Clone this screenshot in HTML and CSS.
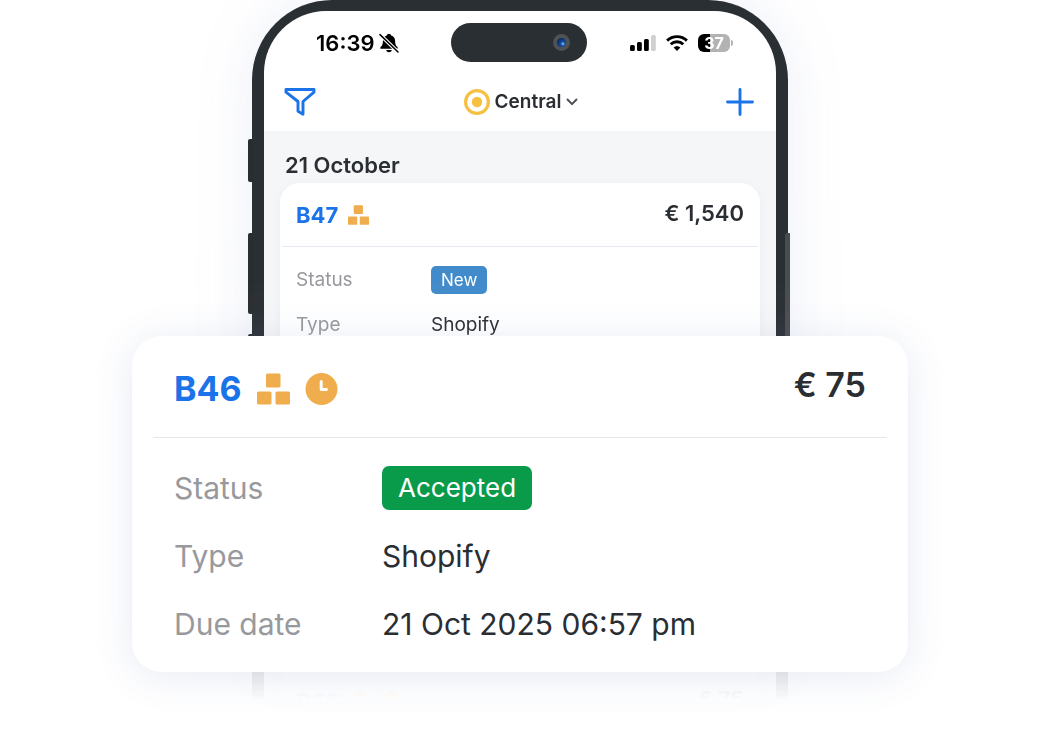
FILE: index.html
```html
<!DOCTYPE html>
<html lang="en">
<head>
  <meta charset="UTF-8" />
  <meta name="viewport" content="width=device-width, initial-scale=1.0"/>
  <title>Orders</title>
  <link rel="stylesheet" href="styles.css">
</head>
<body>
  <!-- Shared icons -->
  <svg class="sprite" aria-hidden="true">
    <symbol id="boxes" viewBox="0 0 33 31">
      <rect x="9" y="0" width="14.5" height="14" rx="1.5" />
      <rect x="0" y="18" width="14.5" height="13" rx="1.5" />
      <rect x="18.5" y="18" width="14.5" height="13" rx="1.5" />
    </symbol>
    <symbol id="clock" viewBox="0 0 32 32">
      <path fill-rule="evenodd" d="M16 0a16 16 0 1 1 0 32a16 16 0 0 1 0-32zM15.700 7a1.500 1.500 0 0 0-1.500 1.500v8c0 .8.600 1.400 1.400 1.400h5.400a1.400 1.400 0 0 0 0-2.800h-3.800v-6.600a1.500 1.500 0 0 0-1.500-1.500z" />
    </symbol>
  </svg>

  <main class="stage">
    <div class="phone">
      <div class="device">
        <span class="side-btn action"></span>
        <span class="side-btn volume-up"></span>
        <span class="side-btn volume-down"></span>
        <span class="side-btn power"></span>

        <div class="screen">
          <div class="status-bar">
            <div class="status-left">
              <span>16:39</span>
              <svg class="bell" viewBox="0 0 20 20" aria-hidden="true">
                <path d="M10 .8c1.100 0 1.900.7 2.200 1.700c2.500.8 3.900 2.700 3.900 5.400c0 3.500.9 4.800 2.500 6.200v1.600H1.400v-1.600c1.600-1.400 2.500-2.700 2.500-6.200c0-2.700 1.400-4.600 3.900-5.400C8.100 1.500 8.900.8 10 .8zM7.200 17.100h5.600c-.3 1.400-1.400 2.200-2.800 2.200s-2.500-.8-2.800-2.200z" />
                <path d="M1 1.600l18 17.400" stroke="#fff" stroke-width="3.600" />
                <path d="M1 1.600l18 17.400" stroke="#000" stroke-width="1.500" stroke-linecap="round" />
              </svg>
            </div>
            <div class="island"><span class="camera"></span></div>
            <div class="status-right">
              <svg width="26" height="16" viewBox="0 0 26 16" aria-hidden="true">
                <rect x="0" y="10" width="4.800" height="6" rx="1.500" />
                <rect x="7" y="7" width="4.800" height="9" rx="1.500" />
                <rect x="14" y="4" width="4.800" height="12" rx="1.500" />
                <rect x="21" y="0" width="4.800" height="16" rx="1.500" fill="#d0d0d1" />
              </svg>
              <svg width="22" height="16" viewBox="0 0 22 16" aria-hidden="true">
                <g fill="none" stroke="#000" stroke-width="2.900">
                  <path d="M1.100 5.600a14.200 14.200 0 0 1 19.800 0" />
                  <path d="M4.700 9.300a9.200 9.200 0 0 1 12.600 0" />
                </g>
                <path d="M11 16l-3.400-3.500a5 5 0 0 1 6.800 0z" />
              </svg>
              <div class="battery"><span>37</span></div>
            </div>
          </div>

          <header class="nav">
            <button type="button" class="icon-btn" aria-label="Filter">
              <svg width="32" height="28" viewBox="0 0 32 28" fill="none" stroke="#1a73e8" stroke-width="2.900" stroke-linejoin="round">
                <path d="M2 1.500h28v2.700L19 13.500v12.700l-5-2.900v-9.800L2 4.200z" />
              </svg>
            </button>
            <button type="button" class="location">
              <svg width="26" height="26" viewBox="0 0 26 26" aria-hidden="true">
                <circle cx="13" cy="13" r="11.400" fill="none" stroke="#f6c041" stroke-width="3.200" />
                <circle cx="13" cy="13" r="5.200" fill="#f6c041" />
              </svg>
              Central
              <svg width="12" height="8" viewBox="0 0 12 8" fill="none" stroke="#4a4f55" stroke-width="1.900" stroke-linecap="round" stroke-linejoin="round" aria-hidden="true">
                <path d="M1.500 1.500L6 6.200l4.500-4.700" />
              </svg>
            </button>
            <button type="button" class="icon-btn" aria-label="Add order">
              <svg width="28" height="28" viewBox="0 0 28 28" stroke="#1a73e8" stroke-width="2.900" stroke-linecap="round">
                <path d="M14 1.500v25M1.500 14h25" />
              </svg>
            </button>
          </header>

          <div class="list">
            <h2 class="date">21 October</h2>

            <article class="card">
              <div class="card-head">
                <div class="card-title">
                  <a href="#b47">B47</a>
                  <svg class="boxes"><use href="#boxes" /></svg>
                </div>
                <strong>€ 1,540</strong>
              </div>
              <dl class="rows">
                <div class="row">
                  <dt>Status</dt>
                  <dd><span class="badge new">New</span></dd>
                </div>
                <div class="row">
                  <dt>Type</dt>
                  <dd>Shopify</dd>
                </div>
              </dl>
            </article>

            <article class="card">
              <div class="card-head">
                <div class="card-title">
                  <a href="#b46">B46</a>
                  <svg class="boxes"><use href="#boxes" /></svg>
                  <svg class="clock"><use href="#clock" /></svg>
                </div>
                <strong>€ 75</strong>
              </div>
            </article>
          </div>
        </div>
      </div>
    </div>

    <!-- Enlarged order -->
    <article class="card featured" id="b46">
      <div class="card-head">
        <div class="card-title">
          <a href="#b46">B46</a>
          <svg class="boxes"><use href="#boxes" /></svg>
          <svg class="clock"><use href="#clock" /></svg>
        </div>
        <strong>€ 75</strong>
      </div>
      <dl class="rows">
        <div class="row">
          <dt>Status</dt>
          <dd><span class="badge accepted">Accepted</span></dd>
        </div>
        <div class="row">
          <dt>Type</dt>
          <dd>Shopify</dd>
        </div>
        <div class="row">
          <dt>Due date</dt>
          <dd>21 Oct 2025 06:57 pm</dd>
        </div>
      </dl>
    </article>
  </main>
</body>
</html>
```
FILE: styles.css
```css
* {
  margin: 0;
  padding: 0;
  box-sizing: border-box;
}
body {
  font-family: Inter, "Liberation Sans", sans-serif;
  background: #fff;
  color: #2a2e33;
}
button {
  font: inherit;
  color: inherit;
  background: none;
  border: none;
  cursor: pointer;
}
a {
  color: #1a73e8;
  text-decoration: none;
}
.sprite {
  position: absolute;
  width: 0;
  height: 0;
}
/* The phone and the enlarged order share one grid cell */
.stage {
  display: grid;
  justify-items: center;
  align-items: start;
  overflow: hidden;
}
.phone,
.featured {
  grid-area: 1 / 1;
}

/* Phone */
.phone {
  width: 100%;
  max-width: 544px;
  filter: drop-shadow(0 0 28px rgba(60, 80, 180, 0.09));
}
.device {
  position: relative;
  padding: 0 4px;
  /* fades out towards the bottom */
  -webkit-mask-image: linear-gradient(#000 280px, rgba(0, 0, 0, 0.97) 336px, rgba(0, 0, 0, 0.1) 672px, transparent 702px);
  mask-image: linear-gradient(#000 280px, rgba(0, 0, 0, 0.97) 336px, rgba(0, 0, 0, 0.1) 672px, transparent 702px);
}
.screen {
  border: 12px solid #2a2f33;
  border-top-width: 11px;
  border-bottom: none;
  border-radius: 80px 80px 0 0;
  background: #f5f6f8;
}
.side-btn {
  position: absolute;
  left: 0;
  width: 5px;
  border-radius: 2px 0 0 2px;
  background: #2a2d30;
}
.action {
  top: 139px;
  height: 43px;
}
.volume-up {
  top: 233px;
  height: 81px;
}
.volume-down {
  top: 334px;
  height: 80px;
}
.power {
  top: 233px;
  left: auto;
  right: 2px;
  height: 130px;
  background: #4a4d50;
}

/* Status bar */
.status-bar {
  display: grid;
  grid-template-columns: minmax(0, 1fr) 136px minmax(0, 1fr);
  align-items: center;
  padding: 12px 2px 11px 0;
  border-radius: 68px 68px 0 0;
  background: #fff;
}
.status-left,
.status-right {
  display: flex;
  align-items: center;
}
.status-left {
  gap: 5px;
  padding-left: 52px;
  font-size: 22px;
  font-weight: 600;
  line-height: 28px;
  color: #000;
}
.bell {
  width: 20px;
  height: 20px;
}
.status-right {
  justify-content: flex-end;
  gap: 10px;
  padding-right: 41px;
}
.island {
  display: flex;
  align-items: center;
  justify-content: flex-end;
  height: 39px;
  padding-right: 17px;
  border-radius: 20px;
  background: #2a2f33;
}
.camera {
  width: 17px;
  height: 17px;
  border: 4px solid #505155;
  border-radius: 50%;
  background: radial-gradient(circle at 65% 65%, #6f9fd0 0 10%, #0f4fa8 25%, #0a1c3c 90%);
}
.battery {
  position: relative;
  width: 32px;
  height: 18px;
  margin-right: 3px;
  border-radius: 6px;
  background: linear-gradient(90deg, #000 37%, #b3b3b3 37%);
  color: #fff;
  font-size: 16px;
  font-weight: 700;
  line-height: 18px;
  text-align: center;
}
.battery::after {
  content: "";
  position: absolute;
  top: 6px;
  right: -3px;
  width: 2px;
  height: 6px;
  border-radius: 0 2px 2px 0;
  background: #b3b3b3;
}

/* Navigation */
.nav {
  display: flex;
  align-items: center;
  justify-content: space-between;
  height: 58px;
  padding: 0 22px 0 20px;
  background: #fff;
}
.icon-btn {
  display: flex;
}
.location {
  display: flex;
  align-items: center;
  gap: 5px;
  font-size: 19px;
  font-weight: 600;
  line-height: 28px;
}

/* Orders */
.list {
  padding: 20px 16px 0;
}
.date {
  margin: 0 5px 4px;
  font-size: 22px;
  font-weight: 600;
  line-height: 28px;
}
.card {
  border-radius: 20px;
  background: #fff;
  box-shadow: 0 2px 8px rgba(40, 50, 80, 0.05);
}
.list .card + .card {
  margin-top: 16px;
}
.list .card:first-of-type {
  min-height: 470px;
}
.card-head {
  display: flex;
  align-items: center;
  justify-content: space-between;
  height: 64px;
  margin: 0 2px;
  padding: 0 14px;
  border-bottom: 1px solid #e6e9ef;
  font-size: 22px;
  line-height: 28px;
}
.card-head strong {
  font-weight: 600;
  padding-bottom: 3px;
}
.card-title {
  display: flex;
  align-items: center;
  gap: 10px;
  font-weight: 700;
}
.boxes,
.clock {
  width: 21px;
  height: 20px;
  fill: #f0ad4e;
}
.rows {
  padding: 10px 16px;
  font-size: 19px;
  line-height: 28px;
}
.row {
  display: grid;
  grid-template-columns: 135px 1fr;
  align-items: center;
  height: 45px;
}
.row dt {
  color: #97999d;
}
.badge {
  display: inline-block;
  padding: 0 10px;
  border-radius: 5px;
  color: #fff;
  font-size: 17px;
  vertical-align: top;
}
.new {
  background: #428bca;
}
.accepted {
  background: #0a9b4a;
}

/* Enlarged order */
.featured {
  z-index: 1;
  width: calc(100% - 32px);
  max-width: 776px;
  margin-top: 336px;
  margin-bottom: 72px;
  border-radius: 30px;
  box-shadow: 0 4px 40px rgba(60, 80, 160, 0.12);
}
.featured .card-head {
  height: 102px;
  margin: 0 21px;
  padding: 0 21px;
  border-color: #e5e6e8;
  font-size: 34px;
  line-height: 44px;
}
.featured .card-title {
  gap: 15px;
  padding-top: 4px;
}
.featured .boxes,
.featured .clock {
  width: 33px;
  height: 32px;
}
.featured .rows {
  padding: 16px 42px 14px;
  font-size: 30px;
  line-height: 44px;
}
.featured .row {
  grid-template-columns: 208px 1fr;
  height: 68px;
}
.featured .badge {
  padding: 0 16px;
  border-radius: 7px;
  font-size: 26px;
}

@media (max-width: 600px) {
  .featured .row {
    grid-template-columns: 120px 1fr;
  }
  .featured .rows {
    font-size: 20px;
  }
}
```
